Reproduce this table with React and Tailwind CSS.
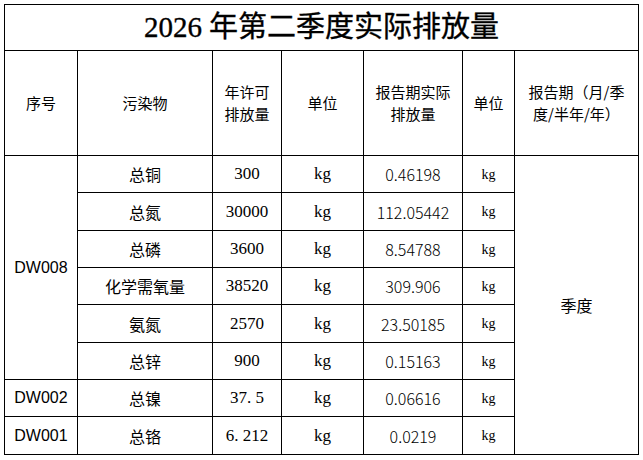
import React from "react";

const rows = [
  { id: "DW008", span: 6, name: "总铜", permit: "300", actual: "0.46198" },
  { name: "总氮", permit: "30000", actual: "112.05442" },
  { name: "总磷", permit: "3600", actual: "8.54788" },
  { name: "化学需氧量", permit: "38520", actual: "309.906" },
  { name: "氨氮", permit: "2570", actual: "23.50185" },
  { name: "总锌", permit: "900", actual: "0.15163" },
  { id: "DW002", span: 1, name: "总镍", permit: "37. 5", actual: "0.06616" },
  { id: "DW001", span: 1, name: "总铬", permit: "6. 212", actual: "0.0219" },
];

const cjk = "font-['Noto_Sans_CJK_SC',sans-serif]";
const cell = "bg-white flex items-center justify-center text-center text-black";
const head = `${cell} ${cjk} text-[15px] leading-[22px]`;

export default function App() {
  return (
    <div className="min-h-[460px] bg-white pt-[4px] pl-[4px]">
      <div className="grid w-fit gap-px bg-black p-px grid-cols-[72px_134px_68px_81px_98px_51px_123px] grid-rows-[45px_104px_36px_37px_36px_36px_37px_36px_36px_37px]">
        {/* title: regular weight thickened a little, like a bold Song face */}
        <div
          className={`${cell} col-span-7 text-[29px] font-['Liberation_Serif','Noto_Sans_CJK_SC',serif] [-webkit-text-stroke:0.35px_black]`}
        >
          <span>2026</span>
          <span className="ml-[7px]">年第二季度实际排放量</span>
        </div>

        {/* header */}
        <div className={head}>序号</div>
        <div className={head}>污染物</div>
        <div className={head}>
          年许可
          <br />
          排放量
        </div>
        <div className={head}>单位</div>
        <div className={head}>
          报告期实际
          <br />
          排放量
        </div>
        <div className={head}>单位</div>
        <div className={head}>
          报告期（月/季
          <br />
          度/半年/年）
        </div>

        {/* body */}
        {rows.map((r, i) => (
          <React.Fragment key={i}>
            {r.id && (
              <div
                className={`${cell} font-['Liberation_Sans',sans-serif] text-[16px] ${
                  r.span === 6 ? "row-span-6" : ""
                }`}
              >
                {r.id}
              </div>
            )}
            <div className={`${cell} ${cjk} text-[16px]`}>{r.name}</div>
            <div className={`${cell} font-['Liberation_Serif',serif] text-[17px]`}>{r.permit}</div>
            <div className={`${cell} font-['Liberation_Serif',serif] text-[17px]`}>kg</div>
            <div className={`${cell} ${cjk} font-light text-[16px] text-[#333]`}>{r.actual}</div>
            <div className={`${cell} font-['Liberation_Serif',serif] text-[14px]`}>kg</div>
            {i === 0 && (
              <div className={`${cell} ${cjk} row-span-8 text-[16px]`}>季度</div>
            )}
          </React.Fragment>
        ))}
      </div>
    </div>
  );
}
